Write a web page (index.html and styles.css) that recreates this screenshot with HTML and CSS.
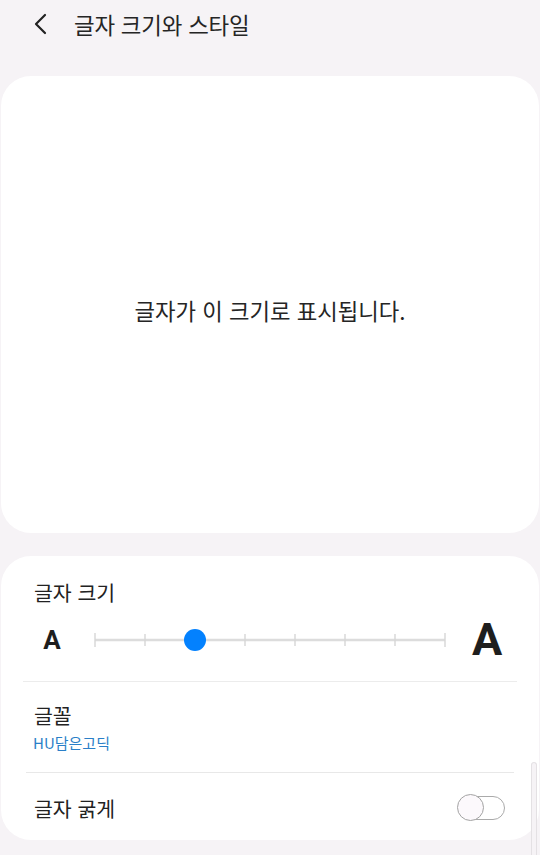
FILE: index.html
```html
<!DOCTYPE html>
<html lang="ko">
<head>
<meta charset="utf-8">
<link rel="stylesheet" href="styles.css">
</head>
<body>
<header class="topbar">
  <svg class="back" width="16" height="22" viewBox="0 0 16 22"><path d="M12 2 L3 11 L12 20" fill="none" stroke="#222" stroke-width="2.2" stroke-linecap="round" stroke-linejoin="round"/></svg>
  <h1 class="title">글자 크기와 스타일</h1>
</header>
<section class="card preview">
  <p class="preview-text">글자가 이 크기로 표시됩니다.</p>
</section>
<section class="card settings">
  <div class="size-block">
    <div class="label">글자 크기</div>
    <div class="slider-row">
      <span class="a-small">A</span>
      <svg class="track" width="354" height="24" viewBox="0 0 354 24">
        <line x1="2" y1="12" x2="352" y2="12" stroke="#dcdcdc" stroke-width="2.4"/>
        <g stroke="#d6d6d6" stroke-width="1.4">
          <line x1="2" y1="5" x2="2" y2="19"/>
          <line x1="52" y1="6" x2="52" y2="18"/>
          <line x1="152" y1="6" x2="152" y2="18"/>
          <line x1="202" y1="6" x2="202" y2="18"/>
          <line x1="252" y1="6" x2="252" y2="18"/>
          <line x1="302" y1="6" x2="302" y2="18"/>
          <line x1="352" y1="5" x2="352" y2="19"/>
        </g>
        <circle cx="102" cy="12" r="11" fill="#0381fe"/>
      </svg>
      <span class="a-big">A</span>
    </div>
  </div>
  <div class="row font-row">
    <div class="label">글꼴</div>
    <div class="sub">HU담은고딕</div>
  </div>
  <div class="row bold-row">
    <div class="label">글자 굵게</div>
    <span class="toggle"><span class="knob"></span></span>
  </div>
</section>
<div class="scrollbar"></div>
</body>
</html>
```
FILE: styles.css
```css
html, body {
  margin: 0;
  padding: 0;
}
body {
  background: #f6f3f6;
  font-family: "Noto Sans CJK KR", "Noto Sans", sans-serif;
  color: #222;
  width: 540px;
  height: 855px;
  overflow: hidden;
  position: relative;
}
.topbar {
  height: 48px;
  display: flex;
  align-items: center;
  padding-left: 33px;
  margin-bottom: 28px;
}
.back {
  display: block;
}
.title {
  margin: 0 0 0 25px;
  font-size: 22.4px;
  font-weight: 400;
  line-height: 30px;
  color: #252525;
  letter-spacing: -0.2px;
}
.card {
  background: #fff;
  border-radius: 30px;
  margin: 0 1px;
}
.preview {
  height: 447px;
  padding-top: 10px;
  display: flex;
  align-items: center;
  justify-content: center;
  margin-bottom: 23px;
}
.preview-text {
  margin: 0;
  font-size: 22.3px;
  line-height: 30px;
  color: #252525;
}
.settings {
  height: 284px;
  padding: 0 22px;
}
.size-block {
  padding-top: 22px;
  padding-bottom: 17px;
  border-bottom: 1px solid #ececec;
}
.label {
  font-size: 20.5px;
  line-height: 28px;
  color: #222;
  padding-left: 11px;
}
.slider-row {
  display: flex;
  align-items: center;
  height: 48px;
  margin-top: 10px;
}
.a-small {
  width: 58px;
  text-align: center;
  font-family: "Roboto", "Liberation Sans", sans-serif;
  font-weight: 700;
  font-size: 26px;
  line-height: 30px;
  color: #1e1e1e;
}
.track {
  margin-left: 12px;
  display: block;
}
.a-big {
  width: 50px;
  margin-left: 15px;
  text-align: center;
  font-family: "Roboto", "Liberation Sans", sans-serif;
  font-weight: 700;
  font-size: 45px;
  line-height: 48px;
  color: #1e1e1e;
}
.row {
  margin: 0 3px;
}
.font-row {
  padding: 20px 0 19px;
  border-bottom: 1px solid #e8e8e8;
}
.font-row .label {
  line-height: 26px;
  padding-left: 8px;
}
.sub {
  margin-top: 5px;
  padding-left: 7px;
  font-size: 15px;
  line-height: 20px;
  color: #2a7fc8;
}
.bold-row {
  height: 66px;
  display: flex;
  align-items: center;
  justify-content: space-between;
  padding-top: 3px;
  box-sizing: border-box;
}
.bold-row .label {
  padding-left: 8px;
}
.toggle {
  position: relative;
  width: 47px;
  height: 24px;
  border: 1.5px solid #aaa;
  border-radius: 14px;
  margin-right: 9px;
  box-sizing: border-box;
  flex: none;
}
.knob {
  position: absolute;
  left: -2px;
  top: -3px;
  width: 27px;
  height: 27px;
  box-sizing: border-box;
  border: 1.5px solid #a3a3a3;
  border-radius: 50%;
  background: #fcf9fc;
}
.scrollbar {
  position: absolute;
  right: 3px;
  top: 762px;
  width: 4px;
  height: 100px;
  border: 1px solid #e4e1e4;
  border-bottom: none;
  border-radius: 4px 4px 0 0;
  background: #f6f3f6;
}
```
